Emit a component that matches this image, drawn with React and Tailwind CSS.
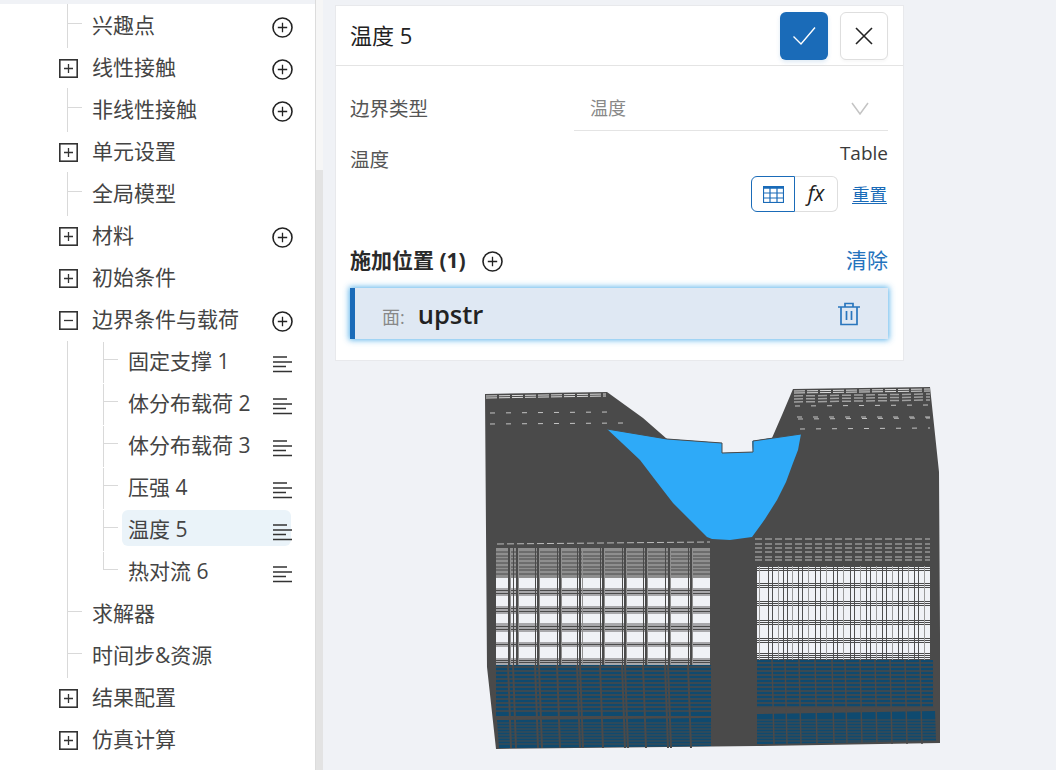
import React from 'react';

const FONT = '"Open Sans", "Noto Sans CJK SC", sans-serif';

const treeRows = [
  { label: '兴趣点', level: 1, add: true },
  { label: '线性接触', level: 0, box: 'plus', add: true },
  { label: '非线性接触', level: 1, add: true },
  { label: '单元设置', level: 0, box: 'plus' },
  { label: '全局模型', level: 1 },
  { label: '材料', level: 0, box: 'plus', add: true },
  { label: '初始条件', level: 0, box: 'plus' },
  { label: '边界条件与载荷', level: 0, box: 'minus', add: true },
  { label: '固定支撑 1', level: 2, menu: true },
  { label: '体分布载荷 2', level: 2, menu: true },
  { label: '体分布载荷 3', level: 2, menu: true },
  { label: '压强 4', level: 2, menu: true },
  { label: '温度 5', level: 2, menu: true, active: true },
  { label: '热对流 6', level: 2, menu: true, last: true },
  { label: '求解器', level: 1 },
  { label: '时间步&资源', level: 1 },
  { label: '结果配置', level: 0, box: 'plus' },
  { label: '仿真计算', level: 0, box: 'plus' },
];

const PlusCircle = ({ size = 21 }) => (
  <svg width={size} height={size} viewBox="0 0 21 21" fill="none" stroke="#222" className="block">
    <circle cx="10.5" cy="10.5" r="9.5" strokeWidth="1.6" />
    <path d="M10.5 5.8v9.4M5.8 10.5h9.4" strokeWidth="1.3" />
  </svg>
);

const MenuLines = () => (
  <svg width="20" height="17" viewBox="0 0 20 17" stroke="#333" strokeWidth="1.5" className="block">
    <path d="M0 1h14M0 6h19M0 10.5h13M0 15.5h19" />
  </svg>
);

const ExpandBox = ({ type }) => (
  <svg width="19" height="19" viewBox="0 0 19 19" fill="none" stroke="#333" className="block">
    <rect x="0.8" y="0.8" width="17.4" height="17.4" strokeWidth="1.6" />
    <path d={type === 'plus' ? 'M5 9.5h9M9.5 5v9' : 'M5 9.5h9'} strokeWidth="1.3" />
  </svg>
);

const TreeRow = ({ row }) => (
  <div className="relative h-[42px] flex items-center">
    {/* connector lines */}
    {row.level === 1 && (
      <>
        <span className="absolute left-[67px] top-[-1px] h-[44px] w-px bg-[#d9d9d9]" />
        <span className="absolute left-[67px] top-[18px] h-px w-[15px] bg-[#d9d9d9]" />
      </>
    )}
    {row.level === 2 && (
      <>
        <span className="absolute left-[67px] top-0 h-[42px] w-px bg-[#d9d9d9]" />
        <span className={`absolute left-[103px] top-[1px] w-px bg-[#d9d9d9] ${row.last ? 'h-[18px]' : 'h-[41px]'}`} />
        <span className="absolute left-[103px] top-[18px] h-px w-[15px] bg-[#d9d9d9]" />
      </>
    )}
    {row.active && <span className="absolute left-[122px] top-[1px] h-[36px] w-[169px] rounded-md bg-[#eaf3f9]" />}

    {row.box && (
      <span className="absolute left-[59px] top-[12px]">
        <ExpandBox type={row.box} />
      </span>
    )}
    <span
      className={`relative -mt-[2px] whitespace-nowrap text-[21px] leading-none text-[#444] ${
        row.level === 2 ? 'ml-[128px]' : 'ml-[92px]'
      }`}
    >
      {row.label}
    </span>
    {row.add && (
      <span className="absolute left-[272px] top-[12px]">
        <PlusCircle />
      </span>
    )}
    {row.menu && (
      <span className="absolute left-[273px] top-[15px]">
        <MenuLines />
      </span>
    )}
  </div>
);

const Sidebar = () => (
  <aside className="flex h-[770px] w-[323px] shrink-0">
    <div className="h-full w-[316px] border-r border-[#dcdcdc] pt-[4px]">
      <div className="h-full bg-white pt-px">
        {treeRows.map((row) => (
          <TreeRow key={row.label} row={row} />
        ))}
      </div>
    </div>
    <div className="flex h-full w-[7px] flex-col bg-[#f6f6f6]">
      <div className="h-[170px]" />
      <div className="flex-1 bg-[#e3e3e3]" />
    </div>
  </aside>
);

const DetailPanel = () => (
  <section className="h-[356px] w-[569px] border border-[#e8e9ec] bg-white">
    <header className="flex h-[60px] items-center justify-between border-b border-[#e4e4e4] pl-[14px] pr-[15px]">
      <h2 className="text-[22px] font-normal text-[#222]">温度 5</h2>
      <div className="flex gap-3">
        <button className="flex h-[48px] w-[48px] items-center justify-center rounded-md bg-[#1a6bb8] shadow-[0_2px_4px_rgba(26,107,184,0.15)]">
          <svg width="24" height="20" viewBox="0 0 24 20" fill="none" stroke="#fff" strokeWidth="1.4">
            <path d="M1.5 10.5l7.5 7.5L23 1.500" />
          </svg>
        </button>
        <button className="flex h-[48px] w-[48px] items-center justify-center rounded-md border border-[#dedede] bg-white shadow-[0_2px_3px_rgba(0,0,0,0.03)]">
          <svg width="18" height="18" viewBox="0 0 18 18" fill="none" stroke="#222" strokeWidth="1.6">
            <path d="M1 1l16 16M17 1L1 17" />
          </svg>
        </button>
      </div>
    </header>

    <div className="flex h-[65px] items-end pl-[14px] pr-[15px]">
      <span className="flex h-[48px] w-[224px] items-center pt-1 text-[19.5px] text-[#555]">边界类型</span>
      <div className="flex h-[48px] flex-1 items-center justify-between border-b border-[#e4e4e4] pl-[16px] pr-[19px] pt-1">
        <span className="text-[18px] text-[#888]">温度</span>
        <svg width="18" height="13" viewBox="0 0 18 13" fill="none" stroke="#c4c4c4" strokeWidth="1.5">
          <path d="M1 1l8 11 8-11" />
        </svg>
      </div>
    </div>

    <div className="flex h-[84px] justify-between pl-[14px] pr-[15px]">
      <span className="mt-[13px] text-[19.5px] leading-[32px] text-[#555]">温度</span>
      <div className="flex flex-col items-end pt-[9px]">
        <span className="text-[19px] leading-[27px] text-[#3a3a3a]">Table</span>
        <div className="mt-[9px] mr-px flex items-center">
          <div className="flex h-[36px]">
            <span className="flex w-[44px] items-center justify-center rounded-l-md border border-[#1a6bb8] bg-white">
              <svg width="21" height="17" viewBox="0 0 21 17" fill="none" stroke="#1a6bb8">
                <rect x="0.5" y="0.5" width="20" height="16" strokeWidth="1.2" />
                <path d="M0 1.5h21" strokeWidth="2.5" />
                <path d="M0 7h21M0 12h21M7 1v16M14 1v16" strokeWidth="1.2" />
              </svg>
            </span>
            <span className="flex w-[43px] items-center justify-center rounded-r-md border border-l-0 border-[#dedede] text-[21px] italic text-[#222]">
              fx
            </span>
          </div>
          <a className="ml-[14px] mt-[2px] text-[17.5px] leading-none text-[#1a6bb8] underline underline-offset-2">重置</a>
        </div>
      </div>
    </div>

    <div className="mt-[30px] flex h-[32px] items-center justify-between pl-[14px] pr-[15px]">
      <div className="flex items-center">
        <span className="text-[21px] font-bold text-[#2a2a2a]">施加位置 (1)</span>
        <span className="ml-[16px]">
          <PlusCircle />
        </span>
      </div>
      <a className="text-[21px] text-[#2473bd]">清除</a>
    </div>

    <div className="ml-[14px] mt-[11px] flex h-[51px] w-[538px] items-center justify-between border-l-[5px] border-[#1a6bb8] bg-[#dfe8f3] pl-[27px] pr-[28px] shadow-[0_0_6px_1px_rgba(60,165,230,0.85)]">
      <div className="flex items-baseline">
        <span className="text-[18px] text-[#888]">面:</span>
        <span className="ml-[13px] text-[25.5px] leading-[40px] font-semibold text-[#222]">upstr</span>
      </div>
      <svg width="22" height="24" viewBox="0 0 22 24" fill="none" stroke="#2a76bd" strokeWidth="1.7">
        <path d="M0 5h22M7 5V1.5h8V5M3 5v17.5h16V5M8.5 9v9M13.5 9v9" />
      </svg>
    </div>
  </section>
);

// grid positions read off the mesh, in page pixels
const leftVerts = [508, 510, 513, 516, 518, 535, 537, 539, 557, 559, 561, 577, 579, 582, 600, 602, 604, 622, 624, 626, 643, 645, 647, 665, 668, 670, 688, 690, 692];
const leftGrayBands = [[588, 8], [606, 8], [623, 9], [642, 5], [658, 7]];
const leftHoriz = [590, 593, 608, 611, 626, 629, 644, 660, 662];
const rightVerts = [759, 768, 772, 778, 783, 787, 792, 798, 802, 808, 815, 820, 826, 833, 837, 843, 850, 854, 860, 866, 870, 876, 882, 886, 892, 898, 902, 908, 914, 918, 924];
const rightHoriz = [566, 568, 570, 583, 585, 587, 601, 603, 605, 620, 622, 624, 638, 640, 642, 653, 655, 657, 659];
const upperDark = [667, 671, 675, 679, 683, 687, 691, 695, 699, 703, 707, 711];
const lowerDark = [723, 726, 729, 732, 735, 738, 741, 744];
const leftDarkVerts = [508, 513, 535, 539, 557, 577, 580, 600, 622, 625, 643, 665, 668, 688];
const rightDarkVerts = [772, 785, 799, 815, 832, 845, 860, 875, 890, 905, 920];

const OX = 470;
const OY = 380;

const Mesh = () => (
  <svg width="480" height="380" viewBox={`${OX} ${OY} 480 380`} className="block">
    <polygon
      fill="#4a4a4a"
      points="485,394 607,392 643,418 667,439 722,443 722,453 753,452 752,441 772,438 782,415 793,389 930,387 939,472 940,635 940,743 757,746 496,749 487,667"
    />
    {/* hatch along the top edges */}
    <g stroke="#dcdcdc" strokeWidth="1" strokeDasharray="11 2">
      <path d="M486 396L606 394M486 398L606 396M794 391L930 389M794 393L930 391" />
    </g>
    <g stroke="#a0a0a0" strokeWidth="1.5" strokeDasharray="9 3">
      <path d="M794 396L930 394M794 399L930 397M794 402L930 400" />
    </g>
    <g stroke="#c4c4c4" strokeWidth="1" strokeDasharray="5 11">
      <path d="M795 406L930 405M797 417L930 417M798 419L930 418M800 429L930 428M490 413L610 412M490 424L625 423" />
    </g>
    {/* dotted rows above the windows */}
    <g stroke="#bcbcbc" strokeWidth="1" strokeDasharray="7 3">
      <path d="M497 544L710 542M755 539H930M755 544H930M755 548H930M755 552H930M755 557H930M755 560H930" />
    </g>
    {/* left window */}
    <rect x="496" y="548" width="214" height="30" fill="#8f8f8f" />
    <g stroke="#4a4a4a" strokeWidth="1">
      <path d="M496 552h214M496 556h214M496 559h214M496 563h214M496 567h214M496 570h214M496 574h214" />
    </g>
    <rect x="496" y="578" width="214" height="87" fill="#f0f2f6" />
    {leftGrayBands.map(([y, h]) => (
      <rect key={y} x="496" y={y} width="214" height={h} fill="#a8a8ab" />
    ))}
    {leftHoriz.map((y) => (
      <rect key={y} x="496" y={y} width="214" height="1" fill="#4a4a4a" />
    ))}
    {leftVerts.map((x, i) => (
      <rect key={x} x={x} y="548" width={i % 3 === 0 ? 2 : 1} height="117" fill={i % 3 === 1 ? '#8f8f8f' : '#4a4a4a'} />
    ))}
    {/* right window */}
    <rect x="757" y="566" width="173" height="94" fill="#f0f2f6" />
    {rightHoriz.map((y) => (
      <rect key={y} x="757" y={y} width="173" height="1" fill="#4a4a4a" />
    ))}
    {rightVerts.map((x, i) => (
      <rect key={x} x={x} y="566" width="1" height="94" fill={i % 3 === 0 ? '#9a9a9a' : '#4f4f4f'} />
    ))}
    {/* lower, darker part of the mesh */}
    <rect x="496" y="665" width="215" height="51" fill="#0f4a6f" />
    <polygon points="497,720 711,718 711,746 499,748" fill="#0f4a6f" />
    <rect x="757" y="660" width="176" height="47" fill="#0f4a6f" />
    <polygon points="757,714 935,711 936,741 757,744" fill="#0f4a6f" />
    {upperDark.map((y) => (
      <path key={y} d={`M496 ${y}H711M757 ${y - 4}H934`} stroke="#4a4a4a" strokeWidth="1.5" />
    ))}
    {lowerDark.map((y) => (
      <path key={y} d={`M497 ${y}H711M757 ${y - 3}H936`} stroke="#4a4a4a" strokeWidth="1.2" />
    ))}
    {leftDarkVerts.map((x) => (
      <path key={x} d={`M${x} 665L${x + 3} 748`} stroke="#4a4a4a" strokeWidth="2" />
    ))}
    {rightDarkVerts.map((x) => (
      <path key={x} d={`M${x} 660L${x + 2} 744`} stroke="#4a4a4a" strokeWidth="1.5" />
    ))}
    {/* selected face */}
    <polygon
      fill="#2eaaf8"
      points="607,429 667,439 722,443 722,453 753,452 752,441 801,434 798,450 793,463 786,482 777,500 765,519 752,537 730,540 712,539 707,537 690,520 673,503 656,481 640,460 622,443"
    />
    <path d="M607 429L667 439L722 443V453L753 452V441L801 434" fill="none" stroke="#4a4a4a" strokeWidth="1" />
  </svg>
);

export default function App() {
  return (
    <div
      className="flex h-[770px] w-[1056px] overflow-hidden bg-[#f0f2f6]"
      style={{ fontFamily: FONT }}
    >
      <Sidebar />
      <main className="flex-1 pl-[12px] pt-[5px]">
        <DetailPanel />
        <div className="ml-[135px] mt-[19px]">
          <Mesh />
        </div>
      </main>
    </div>
  );
}
